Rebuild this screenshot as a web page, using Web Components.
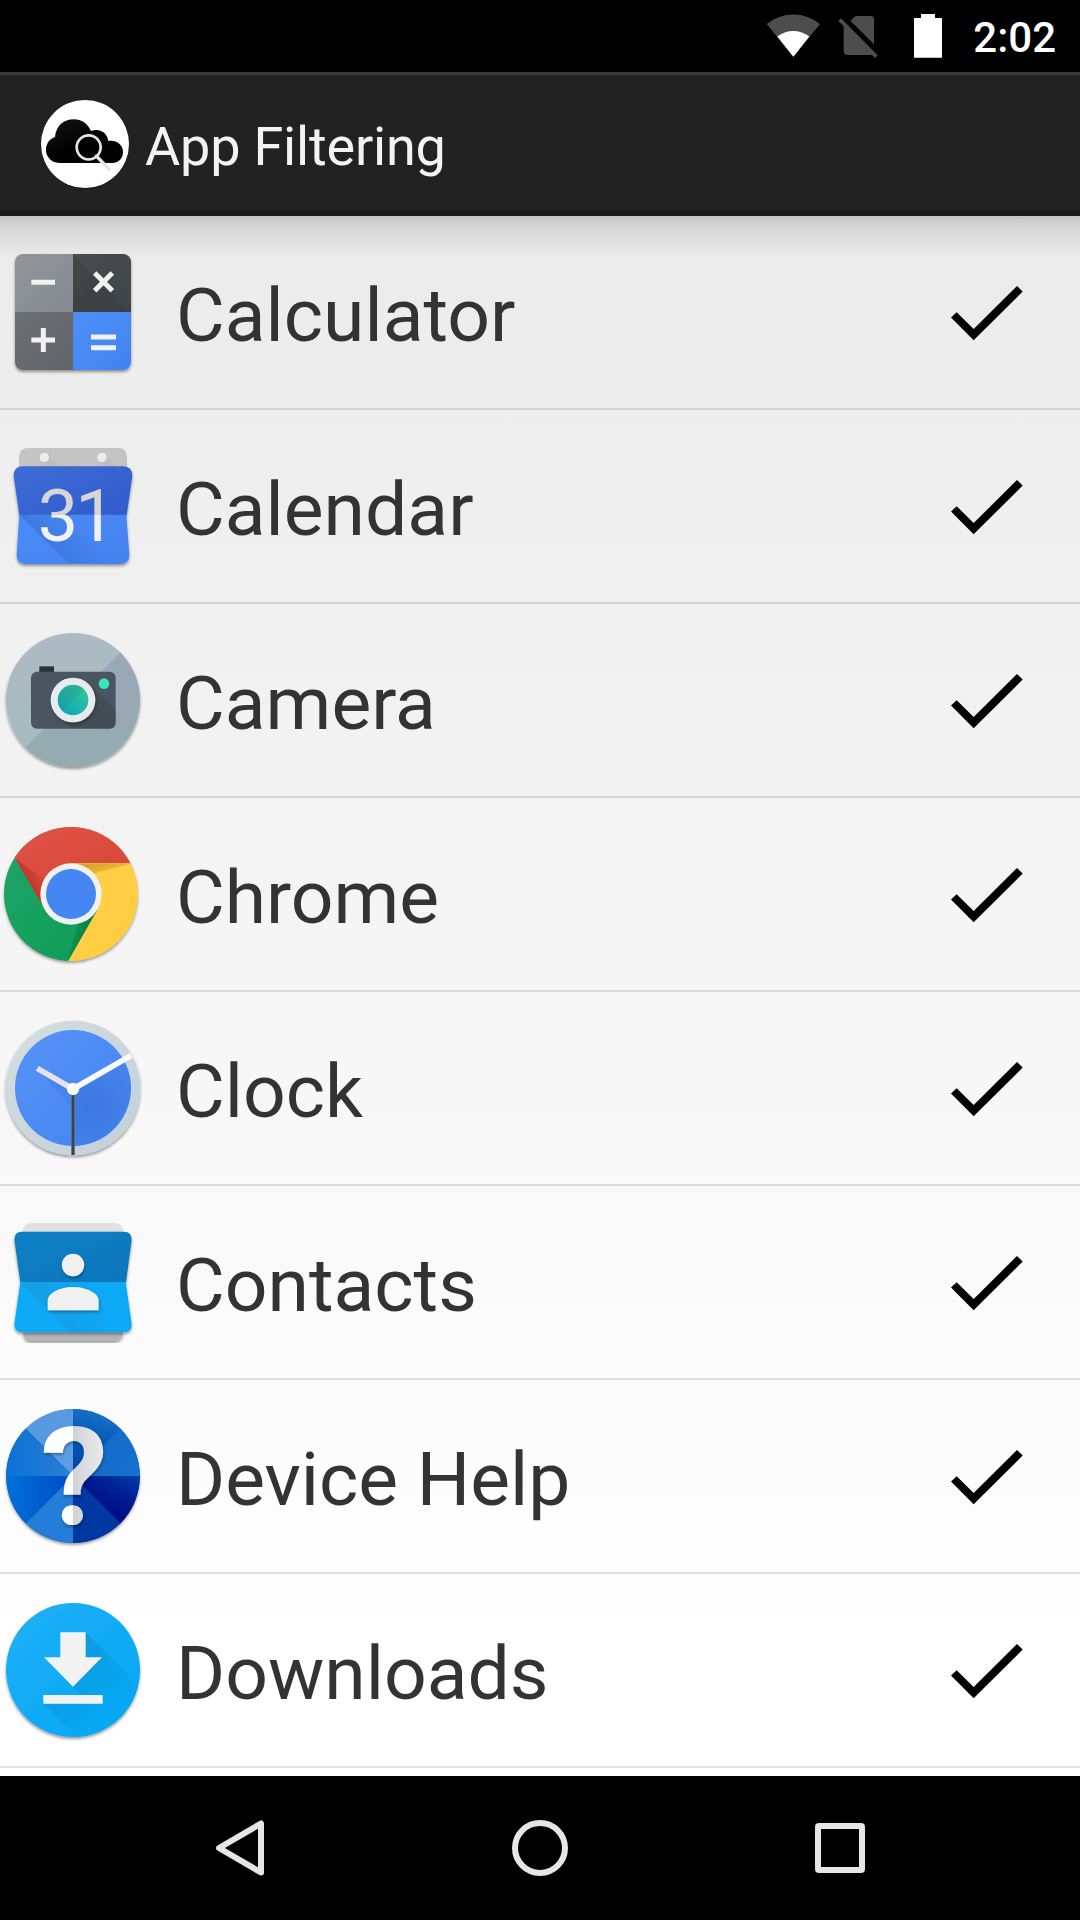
<!DOCTYPE html>
<html lang="en">
<head>
<meta charset="utf-8">
<title>App Filtering</title>
<style>
html,body{margin:0;padding:0;background:#000}
body{width:1080px;height:1920px;overflow:hidden;font-family:Roboto,"Noto Sans",sans-serif}
</style>
</head>
<body>
<phone-screen>
  <status-bar slot="status">2:02</status-bar>
  <action-bar slot="header">App Filtering</action-bar>
  <app-row icon="calculator">Calculator</app-row>
  <app-row icon="calendar">Calendar</app-row>
  <app-row icon="camera">Camera</app-row>
  <app-row icon="chrome">Chrome</app-row>
  <app-row icon="clock">Clock</app-row>
  <app-row icon="contacts">Contacts</app-row>
  <app-row icon="help">Device Help</app-row>
  <app-row icon="downloads">Downloads</app-row>
  <nav-bar slot="nav"></nav-bar>
</phone-screen>
<script>
function define(name, html) {
  customElements.define(name, class extends HTMLElement {
    constructor() {
      super();
      this.attachShadow({ mode: 'open' }).innerHTML = html;
    }
  });
}

define('phone-screen', `
<style>
:host{display:flex;flex-direction:column;width:1080px;height:1920px;overflow:hidden;
  background:linear-gradient(#e8e8e8 0,#fff 1660px)}
main{flex:1;min-height:0;overflow:hidden;position:relative}
main::before{content:"";position:absolute;left:0;right:0;top:0;height:42px;z-index:1;
  background:linear-gradient(rgba(0,0,0,.165) 0 3px,rgba(0,0,0,.135) 3px,rgba(0,0,0,.065) 18px,rgba(0,0,0,.018) 36px,transparent)}
</style>
<slot name="status"></slot><slot name="header"></slot><main><slot></slot></main><slot name="nav"></slot>`);

define('status-bar', `
<style>
:host{display:flex;height:72px;background:#000;color:#fff;justify-content:flex-end;align-items:center;padding-right:24px;box-sizing:border-box}
svg{display:block;width:210px;height:72px}
time{font-size:42px;line-height:50px;font-weight:500;margin-left:16px;padding-top:4px}
</style>
<svg viewBox="0 0 630 216">
  <path fill="#4d4d4d" d="M139 170 59 72A126.500 126.500 0 0 1 219 72Z"/>
  <path fill="#fff" d="M139 170 91 109.500A77 77 0 0 1 187 109.500Z"/>
  <path fill="#4d4d4d" d="M310 62 322 51Q325 48 330 48H371Q381 48 381 58V133Z"/>
  <path fill="#4d4d4d" d="M282 55 392 166 384 174 375 165H301Q290 165 290 154V79L274 63Z"/>
  <path fill="#fff" d="M522 42h42v12h21v119h-84V54h21z"/>
</svg>
<time><slot></slot></time>`);

define('action-bar', `
<style>
:host{display:flex;height:144px;box-sizing:border-box;background:#222;border-top:3px solid #3a3a3a;border-bottom:6px solid #1b1b1b;color:#f3f3f3;align-items:flex-start}
svg{display:block;width:145px;height:135px;flex:none}
h1{margin:40px 0 0;font-size:54px;line-height:64px;font-weight:400;white-space:nowrap;letter-spacing:-.2px}
</style>
<svg viewBox="0 45 435 405">
 <defs><linearGradient id="cloud" x2="1" y2="1"><stop stop-color="#161616"/><stop offset=".5" stop-color="#000"/></linearGradient></defs>
 <circle cx="255" cy="255" r="132" fill="#1a1a1a"/>
 <circle cx="255" cy="252" r="132" fill="#fff"/>
 <path fill="url(#cloud)" d="M178 309A40 40 0 0 1 165 231C168 197 192 178 221 178C245 178 263 191 273 213C297 204 321 216 325 243C349 239 369 254 369 276C369 296 355 309 337 309Z"/>
 <circle cx="266" cy="262" r="36" fill="none" stroke="#e1e6e4" stroke-width="8"/>
 <path d="M289 288 328 328" stroke="#e1e6e4" stroke-width="10" stroke-linecap="round"/>
</svg>
<h1><slot></slot></h1>`);

define('check-mark', `
<style>:host{display:block;width:180px;height:192px;flex:none}svg{display:block}</style>
<svg width="180" height="192" viewBox="0 48 540 576"><path d="M351 258 368 274.500 221 421 153 352.500 170 336.500 221 387Z"/></svg>`);

const SHADOW = '<filter id="sh" x="-20%" y="-20%" width="140%" height="140%"><feDropShadow dx="0" dy="6" stdDeviation="5" flood-opacity=".4"/></filter><filter id="soft" x="-20%" y="-20%" width="150%" height="150%"><feDropShadow dx="2" dy="5" stdDeviation="4" flood-opacity=".35"/></filter>';
const grad = (id, a, b) => `<linearGradient id="${id}" x2="1" y2="1"><stop stop-color="${a}"/><stop offset="1" stop-color="${b}"/></linearGradient>`;

/* Each icon: [distance of its drawing from the top of the row, markup in thirds of a pixel] */
const ICONS = {
calculator: [14, `
 <defs>${grad('a','#8f9599','#858b90')}${grad('b','#494d50','#3f4346')}${grad('c','#6d7074','#606469')}${grad('d','#4f8ff7','#4083f1')}
 <clipPath id="k"><rect x="45" y="72" width="348" height="348" rx="24"/></clipPath></defs>
 <g filter="url(#sh)"><g clip-path="url(#k)">
 <path fill="url(#a)" d="M45 72h174v174H45z"/><path fill="url(#b)" d="M219 72h174v174H219z"/>
 <path fill="#3c4042" opacity=".65" d="M219 72 393 246H219z"/>
 <path fill="url(#c)" d="M45 246h174v174H45z"/><path fill="url(#d)" d="M219 246h174v174H219z"/></g></g>
 <g stroke="#f1f1f1" stroke-width="15"><path d="M94 157h71M94 330h71M130 294v72M273 321h75M273 353h75"/><path d="M284 129 337 182M337 129 284 182"/></g>`],
calendar: [20, `
 <defs>${grad('t','#3e6cd6','#2f5bca')}${grad('b','#4a8cf7','#4482f0')}
 <linearGradient id="n" gradientUnits="userSpaceOnUse" x1="0" y1="254" x2="0" y2="255"><stop stop-color="#d6d6d6"/><stop offset="1" stop-color="#f1f1f1"/></linearGradient></defs>
 <path fill="#c4c4c4" d="M57 112V82Q57 54 85 54H353Q381 54 381 82V112Z"/>
 <path fill="#b7b7b7" d="M124 92 145 74 172 108H138ZM297 92 318 74 346 108H312Z" opacity=".5"/>
 <circle cx="133" cy="82" r="14" fill="#eee"/><circle cx="306" cy="82" r="14" fill="#eee"/>
 <g filter="url(#sh)"><path fill="url(#t)" d="M68 109H370Q397 110 397 138L380 256H58L41 138Q41 109 68 109Z"/>
 <path fill="url(#b)" d="M58 254H379L388 374Q388 402 360 402H78Q50 402 50 374Z"/></g>
 <linearGradient id="ls" gradientUnits="userSpaceOnUse" x1="130" y1="330" x2="220" y2="250"><stop stop-color="#3d79e2"/><stop offset="1" stop-color="#3d79e2" stop-opacity="0"/></linearGradient>
 <path fill="url(#ls)" d="M59 255H379L386 374Q386 400 360 400H205Z"/>
 <text x="113 226" y="332" font-family="Roboto" font-size="216" fill="url(#n)">31</text>`],
camera: [16, `
 <defs><linearGradient id="bg" x2=".3" y2="1"><stop stop-color="#afbac4"/><stop offset="1" stop-color="#a2bcbe"/></linearGradient>
 <linearGradient id="dk" x1=".8" y1="0" x2=".3" y2="1"><stop stop-color="#98a8b5"/><stop offset="1" stop-color="#94abb0"/></linearGradient>
 <linearGradient id="l" x1="0" y1="1" x2="1" y2="0"><stop stop-color="#05a5c2"/><stop offset="1" stop-color="#3ac893"/></linearGradient>
 <clipPath id="k"><circle cx="219" cy="240" r="201"/></clipPath></defs>
 <circle cx="219" cy="240" r="201" fill="url(#bg)" filter="url(#sh)"/>
 <path clip-path="url(#k)" fill="url(#dk)" d="M361 98 77 382V441H430V98Z"/>
 <path fill="#2b3236" d="M118 139h44v20h-44z"/><rect x="93" y="155" width="254" height="171" rx="18" fill="#4a5561"/>
 <path fill="#414c55" d="M267 193 346 270V308Q346 325 330 325H215L172 286Z"/>
 <g filter="url(#soft)"><circle cx="219" cy="240" r="67" fill="#e8ebee"/></g><circle cx="219" cy="240" r="46" fill="url(#l)"/>
 <path fill="#248d82" opacity=".3" d="M187 273A46 46 0 0 1 252 208Z"/>
 <circle cx="312" cy="191" r="16" fill="#38e5bf"/>`],
chrome: [12, `
 <defs>${grad('r','#e15449','#d54232')}${grad('g','#20a567','#0e9c57')}${grad('y','#ffd04a','#ffcc3e')}
 <linearGradient id="ys" gradientUnits="userSpaceOnUse" x1="300" y1="161" x2="308" y2="192"><stop stop-color="#dba52b"/><stop offset="1" stop-color="#f0bd38"/></linearGradient>
 <linearGradient id="rs" gradientUnits="userSpaceOnUse" x1="90" y1="225" x2="132" y2="200"><stop stop-color="#bd382c"/><stop offset="1" stop-color="#da483b"/></linearGradient>
 <linearGradient id="gs" gradientUnits="userSpaceOnUse" x1="255" y1="370" x2="215" y2="352"><stop stop-color="#088445"/><stop offset="1" stop-color="#0f9957"/></linearGradient>
 <clipPath id="k"><circle cx="213" cy="252" r="201"/></clipPath></defs>
 <circle cx="213" cy="252" r="200" filter="url(#sh)" fill="#b9a060"/>
 <g clip-path="url(#k)"><path fill="url(#g)" d="M0 60H133L292 298 204 460H0Z"/>
 <path fill="url(#r)" d="M0 70 213 40 450 40V161H213L124 280 45 145Z"/>
 <path fill="url(#y)" d="M213 160H450V470H195L204 453 292 298Z"/>
 <path fill="url(#ys)" d="M213 161H390L280 191Z"/>
 <path fill="url(#rs)" d="M45 145 140 212 124 280Z"/>
 <path fill="url(#gs)" d="M292 300 204 453 232 343Z"/></g>
 <circle cx="213" cy="252" r="92" fill="#f2f2f2"/><circle cx="213" cy="252" r="75" fill="#4586f3"/>`],
clock: [13, `
 <defs>${grad('o','#d5dedf','#c2cedb')}${grad('i','#5793f8','#4284f0')}
 <radialGradient id="s" gradientUnits="userSpaceOnUse" cx="268" cy="300" r="165"><stop stop-color="#3870da" stop-opacity=".75"/><stop offset="1" stop-color="#3c78e1" stop-opacity=".3"/></radialGradient>
 <clipPath id="k"><circle cx="219" cy="249" r="174"/></clipPath></defs>
 <circle cx="219" cy="249" r="202" fill="url(#o)" filter="url(#sh)"/>
 <circle cx="219" cy="249" r="174" fill="url(#i)"/>
 <g clip-path="url(#k)"><path fill="url(#s)" d="M219 253 365 170 430 245V450H219Z"/><path fill="#386fd4" opacity=".25" d="M119 199 204 248 219 300V313Z"/></g>
 <path d="M219 270V450" stroke="#5d6670" stroke-width="11"/><path d="M219 270V450" stroke="#3f4347" stroke-width="6"/>
 <path d="M112 190 219 252" stroke="#e4e4e8" stroke-width="17"/>
 <path d="M219 252 394 151" stroke="#fafafa" stroke-width="17"/>
 <circle cx="219" cy="252" r="18.500" fill="#fafafa"/>`],
contacts: [19, `
 <defs>${grad('t','#117fc3','#0676bd')}</defs>
 <path fill="#e1e1e1" d="M67 82Q70 54 98 54H342Q368 54 371 82Z"/>
 <path fill="#b5b5b5" filter="url(#sh)" d="M68 380H370Q367 408 340 408H98Q71 408 68 380Z"/>
 <g filter="url(#sh)"><path fill="url(#t)" d="M66 80H372Q395 80 395 104L378 232H61L43 104Q43 80 66 80Z"/>
 <path fill="#08a8f6" d="M61 231H377L395 358Q395 382 371 382H67Q43 382 43 358Z"/></g>
 <linearGradient id="ls" gradientUnits="userSpaceOnUse" x1="130" y1="310" x2="240" y2="220"><stop stop-color="#149fe5"/><stop offset="1" stop-color="#149fe5" stop-opacity="0"/></linearGradient>
 <path fill="url(#ls)" d="M61 231H377L384 280 300 382H213Z"/>
 <g fill="#f0f0f0" filter="url(#soft)"><circle cx="219" cy="180" r="33.500"/><path d="M143 316V287C143 264 180 246 219 246S296 264 296 287V316Z"/></g>`],
help: [15, `
 <defs><clipPath id="k"><circle cx="219" cy="243" r="201"/></clipPath>
 ${grad('a','#5498df','#5c9de2')}${grad('c','#1568c2','#1671cf')}
 <linearGradient id="b" gradientUnits="userSpaceOnUse" x1="290" y1="50" x2="240" y2="220"><stop stop-color="#1a70c8"/><stop offset=".5" stop-color="#0058b4"/><stop offset="1" stop-color="#0046a8"/></linearGradient>
 <linearGradient id="e" x2="1" y2="0"><stop stop-color="#0b72d5"/><stop offset="1" stop-color="#2a7fd6"/></linearGradient>
 <linearGradient id="f" x2="1" y2="0"><stop stop-color="#0071d8"/><stop offset="1" stop-color="#004bc8"/></linearGradient>
 <linearGradient id="g" gradientUnits="userSpaceOnUse" x1="390" y1="243" x2="330" y2="360"><stop stop-color="#0038a4"/><stop offset=".5" stop-color="#001c92"/><stop offset="1" stop-color="#000c86"/></linearGradient>
 <linearGradient id="q" gradientUnits="userSpaceOnUse" x1="-89" x2="93" y1="0" y2="0"><stop stop-color="#fff"/><stop offset=".488" stop-color="#fff"/><stop offset=".49" stop-color="#cfd3d7"/><stop offset="1" stop-color="#ebebeb"/></linearGradient></defs>
 <circle cx="219" cy="243" r="200" fill="#0654b8" filter="url(#sh)"/>
 <g clip-path="url(#k)">
 <path fill="url(#a)" d="M219 243 18 42H219Z"/><path fill="url(#b)" d="M219 243V42H420Z"/>
 <path fill="url(#c)" d="M219 243 420 42V243Z"/><path fill="url(#g)" d="M219 243H420V444Z"/>
 <path fill="#0038a2" d="M219 243 420 444H219Z"/><path fill="#247dd6" d="M219 243V444H18Z"/>
 <path fill="url(#f)" d="M219 243 18 444V243Z"/><path fill="url(#e)" d="M219 243H18V42Z"/></g>
 <text transform="translate(219 388)" x="4" text-anchor="middle" font-family="Roboto" font-weight="700" font-size="405" fill="url(#q)" filter="url(#soft)">?</text>`],
downloads: [16, `
 <defs>${grad('a','#20b0f6','#02a6f5')}<clipPath id="k"><circle cx="219" cy="240" r="201"/></clipPath>
 <linearGradient id="s" gradientUnits="userSpaceOnUse" x1="220" y1="200" x2="350" y2="330"><stop stop-color="#0c9be0"/><stop offset="1" stop-color="#06a7f3"/></linearGradient></defs>
 <circle cx="219" cy="240" r="201" fill="url(#a)" filter="url(#sh)"/>
 <path clip-path="url(#k)" fill="url(#s)" d="M257 127 440 310V460H250L131 341H308V315H243L219 290 257 202Z"/>
 <path fill="#f2f2f2" d="M181 127h76v75h49L219 290 132 202h49zM130 315h178v26H130z"/>`]
};

customElements.define('app-icon', class extends HTMLElement {
  connectedCallback() {
    if (this.shadowRoot) return;
    const [top, art] = ICONS[this.getAttribute('name')];
    this.attachShadow({ mode: 'open' }).innerHTML =
      `<style>:host{display:block;width:146px;height:192px;flex:none}svg{display:block}</style>
       <svg width="146" height="192" viewBox="0 ${-top * 3} 438 576">${SHADOW}${art}</svg>`;
  }
});

customElements.define('app-row', class extends HTMLElement {
  connectedCallback() {
    if (this.shadowRoot) return;
    this.attachShadow({ mode: 'open' }).innerHTML = `
<style>
:host{display:flex;align-items:center;height:192px;border-bottom:2px solid rgba(0,0,0,.115);color:#333}
.label{flex:1;padding-left:30px;padding-top:6px;font-size:75px;line-height:88px;white-space:nowrap}
</style>
<app-icon name="${this.getAttribute('icon')}"></app-icon>
<span class="label"><slot></slot></span>
<check-mark></check-mark>`;
  }
});

define('nav-bar', `
<style>
:host{display:flex;height:144px;background:#000;justify-content:center;align-items:center;gap:240px}
svg{display:block;width:60px;height:60px;overflow:visible;fill:none;stroke:#e6e6e6;stroke-width:6;stroke-linejoin:round}
</style>
<svg viewBox="210 1818 60 60"><path d="M261 1823.500V1872.500L219 1848Z"/></svg>
<svg viewBox="510 1818 60 60"><circle cx="540" cy="1848" r="25"/></svg>
<svg viewBox="810 1818 60 60"><rect x="818" y="1826" width="44" height="44" rx="1"/></svg>`);
</script>
</body>
</html>
